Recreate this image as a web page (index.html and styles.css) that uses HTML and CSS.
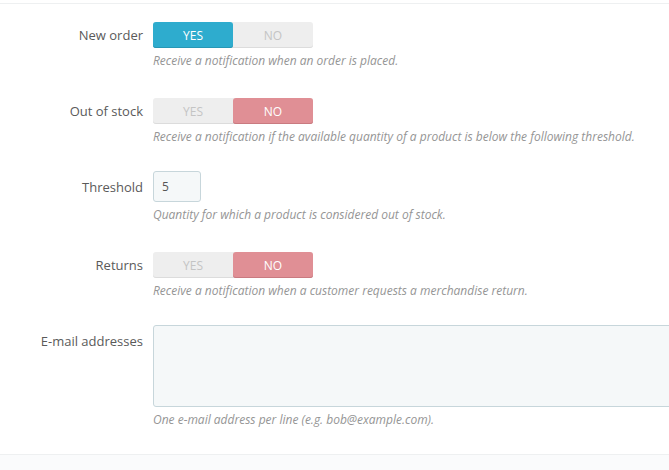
FILE: index.html
```html
<!DOCTYPE html>
<html>
<head>
<meta charset="utf-8">
<link rel="stylesheet" href="styles.css">
</head>
<body>
<div class="panel">
  <form class="form">
    <label class="label">New order</label>
    <div class="field">
      <div class="switch">
        <span class="opt yes on">YES</span>
        <span class="opt no">NO</span>
      </div>
      <p class="help">Receive a notification when an order is placed.</p>
    </div>

    <label class="label">Out of stock</label>
    <div class="field">
      <div class="switch">
        <span class="opt yes">YES</span>
        <span class="opt no on">NO</span>
      </div>
      <p class="help">Receive a notification if the available quantity of a product is below the following threshold.</p>
    </div>

    <label class="label">Threshold</label>
    <div class="field">
      <input class="input" type="text" value="5">
      <p class="help">Quantity for which a product is considered out of stock.</p>
    </div>

    <label class="label">Returns</label>
    <div class="field">
      <div class="switch">
        <span class="opt yes">YES</span>
        <span class="opt no on">NO</span>
      </div>
      <p class="help">Receive a notification when a customer requests a merchandise return.</p>
    </div>

    <label class="label">E-mail addresses</label>
    <div class="field">
      <textarea class="textarea"></textarea>
      <p class="help">One e-mail address per line (e.g. bob@example.com).</p>
    </div>
  </form>
  <div class="footer"></div>
</div>
</body>
</html>
```

FILE: styles.css
```css
html, body {
  margin: 0;
  padding: 0;
  background: #fff;
  overflow: hidden;
}
body {
  font-family: "Open Sans", "DejaVu Sans", sans-serif;
  color: #555;
  width: 669px;
  height: 470px;
}
.panel {
  margin-top: 3px;
  border-top: 1px solid #eef0f1;
}
.form {
  display: grid;
  grid-template-columns: 143px 1fr;
  column-gap: 10px;
  padding-top: 15px;
}
.label {
  text-align: right;
  font-size: 13px;
  line-height: 18px;
  padding-top: 7px;
  color: #5a5a5a;
}
.field {
  min-width: 0;
  padding-bottom: 25px;
}
.switch {
  display: flex;
  width: 160px;
  height: 26px;
  margin-top: 3px;
  border-radius: 3px;
  background: #eeeeee;
  box-shadow: inset 0 -1px 0 #dcdcdc;
}
.opt {
  flex: 1;
  display: flex;
  align-items: center;
  justify-content: center;
  font-size: 12px;
  color: #c4c4c4;
  border-radius: 3px;
}
.opt.yes.on {
  background: #2eacce;
  color: #fff;
  box-shadow: inset 0 -1px 0 #2797b5;
}
.opt.no.on {
  background: #e08f95;
  color: #fff;
  box-shadow: inset 0 -1px 0 #c97a80;
}
.help {
  margin: 4px 0 0;
  font-size: 12px;
  line-height: 18px;
  font-style: italic;
  color: #959595;
  white-space: nowrap;
}
.input {
  display: block;
  box-sizing: border-box;
  width: 48px;
  height: 31px;
  margin: 0;
  padding: 0 8px;
  border: 1px solid #c7d6db;
  border-radius: 3px;
  background: #f5f8f9;
  font-family: "Open Sans", sans-serif;
  font-size: 12px;
  color: #555;
  outline: none;
}
.textarea {
  display: block;
  box-sizing: border-box;
  width: 540px;
  height: 82px;
  margin: 0;
  border: 1px solid #c7d6db;
  border-radius: 3px;
  background: #f5f8f9;
  resize: none;
  outline: none;
}
.footer {
  border-top: 1px solid #eef0f1;
  background: #fafbfc;
  height: 20px;
}
```
